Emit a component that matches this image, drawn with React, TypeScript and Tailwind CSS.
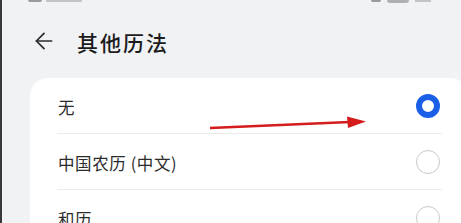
import { ArrowLeft } from 'lucide-react'

const options = [
  { label: '无', selected: true },
  { label: '中国农历 (中文)', selected: false },
  { label: '和历', selected: false },
]

function Radio({ selected }: { selected: boolean }) {
  return selected ? (
    <div className="mr-[2px] w-[24px] h-[24px] rounded-full border-[6.5px] border-[#1b5fe6] bg-white" />
  ) : (
    <div className="mr-[2px] w-[24px] h-[24px] rounded-full border-[1.5px] border-[#c9c9c9] bg-white" />
  )
}

export default function App() {
  return (
    <div
      className="relative w-[461px] h-[223px] overflow-hidden bg-[#f1f2f4] border-l-2 border-[#3a3a3a]"
      style={{ fontFamily: '"Noto Sans CJK SC", "Noto Sans", sans-serif' }}
    >
      {/* status bar, mostly scrolled out of view */}
      <div className="h-[4px] flex items-start justify-between pl-[26px] pr-[30px]">
        <div className="flex gap-[4px]">
          <div className="w-[14px] h-[2px] rounded-b bg-[#9a9a9a]" />
          <div className="w-[36px] h-[2px] bg-[#c4c4c4]" />
        </div>
        <div className="flex gap-[6px]">
          <div className="w-[10px] h-[2px] rounded-b bg-[#9a9a9a]" />
          <div className="w-[22px] h-[3px] rounded-b bg-[#b0b0b0]" />
          <div className="w-[16px] h-[2px] bg-[#c4c4c4]" />
        </div>
      </div>

      <div className="h-[74px] flex items-center pl-[29px]">
        <ArrowLeft className="w-[26px] h-[26px] text-[#2a2a2a]" strokeWidth={1.6} />
        <span className="ml-[20px] pt-[2px] text-[21px] font-medium tracking-[2px] text-[#1c1c1c] leading-none">
          其他历法
        </span>
      </div>

      <div className="ml-[28px] w-[438px] rounded-[18px] bg-white pl-[27px]">
        {options.map((o, i) => (
          <div
            key={o.label}
            className={`h-[56px] flex items-center justify-between mr-[26px] ${
              i < options.length - 1 ? 'border-b border-[#ebebeb]' : ''
            }`}
          >
            <span className="pt-[3px] pl-[1px] text-[16.5px] tracking-[0.6px] text-[#2b2b2b]">{o.label}</span>
            <Radio selected={o.selected} />
          </div>
        ))}
      </div>

      {/* red annotation arrow */}
      <svg className="absolute left-0 top-0 pointer-events-none" width="461" height="223">
        <line x1="208" y1="128" x2="348" y2="122" stroke="#d41c1c" strokeWidth="2.4" />
        <polygon points="345,116.5 364,121.5 346,128" fill="#d41c1c" />
      </svg>
    </div>
  )
}
